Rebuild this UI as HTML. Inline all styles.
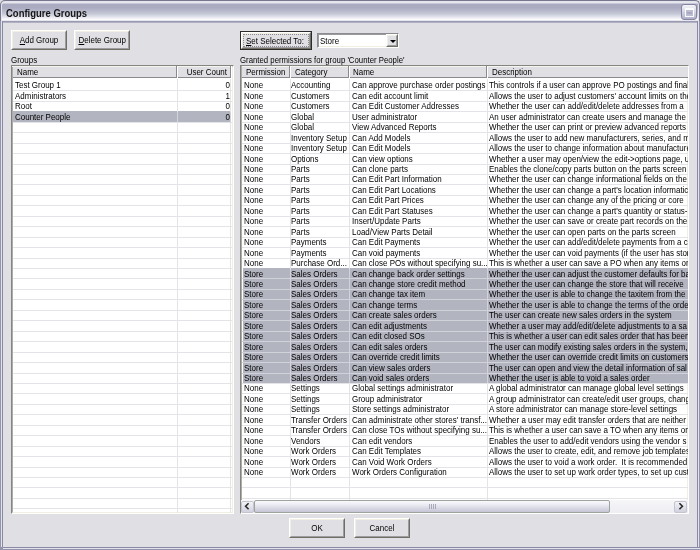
<!DOCTYPE html>
<html><head><meta charset="utf-8">
<style>
html,body{margin:0;padding:0;}
body{width:700px;height:550px;overflow:hidden;position:relative;background:#E0DFE3;font-family:"Liberation Sans",sans-serif;font-size:9.5px;color:#000;}
div,span{box-sizing:border-box;}
.a{position:absolute;}
.t{position:absolute;white-space:nowrap;line-height:10px;transform:scaleX(0.84);transform-origin:0 0;}
.tc{transform-origin:50% 0;}
.tr{transform-origin:100% 0;}
.btn{position:absolute;background:#E0DFE3;border-top:1px solid #FFFFFF;border-left:1px solid #FFFFFF;border-right:1px solid #716F64;border-bottom:1px solid #716F64;}
.btn:before{content:"";position:absolute;left:0;top:0;right:0;bottom:0;border-right:1px solid #9D9DA1;border-bottom:1px solid #9D9DA1;border-top:1px solid #F1EFE2;border-left:1px solid #F1EFE2;}
.u{text-decoration:underline;}
.lv{position:absolute;background:#fff;border-top:1px solid #85857F;border-left:1px solid #85857F;border-right:1px solid #FFFFFF;border-bottom:1px solid #FFFFFF;overflow:hidden;}
.lvin{position:absolute;left:0;top:0;right:0;bottom:0;border-top:1px solid #ACACA8;border-left:1px solid #ACACA8;border-right:1px solid #F1EFE2;border-bottom:1px solid #F1EFE2;}
.hd{position:absolute;background:#E0DFE3;}
.sep{position:absolute;top:0;height:12px;width:2px;border-left:1px solid #8A8A8E;border-right:1px solid #FFFFFF;}
.gl{position:absolute;height:1px;background:#E4E4E8;}
.gv{position:absolute;width:1px;background:#E4E4E8;}
.sel{position:absolute;background:#B2B4C0;}
#root{position:absolute;left:0;top:0;width:700px;height:550px;will-change:transform;}
</style></head><body><div id="root">

<div class="a" style="left:0;top:0;width:700px;height:23px;border-radius:5px 5px 0 0;border:1px solid #76768F;border-bottom:0;background-origin:border-box;background-image:linear-gradient(to bottom,#6E6E88 0px,#6E6E88 1px,#E6E6EE 1px,#E6E6EE 3px,#A9A9C0 4px,#ABABC2 8px,#C6C9D7 14px,#EDEDF3 18px,#FBFBFD 19.5px,#FBFBFD 20.3px,#9A9AB3 21.2px,#9A9AB3 22.2px,#D6D6DE 23px);box-shadow:inset 1px 1px 0 #E4E4EC, inset -1px 0 0 #E4E4EC;"></div>
<div class="t" style="left:6px;top:6.6px;font-weight:bold;font-size:10.6px;letter-spacing:0;line-height:12px;color:#151515;transform:scaleX(0.895);">Configure Groups</div>
<div class="a" style="left:681px;top:4px;width:16px;height:16px;border:1px solid #8585A3;border-radius:3px;background:linear-gradient(to bottom,#F4F4F8,#D0D0E0 55%,#AEAEC8);"></div>
<div class="a" style="left:684.6px;top:8px;width:9px;height:8.6px;border:1px solid #FAFAFC;border-top-width:2px;background:#BDBDD2;"></div>
<div class="a" style="left:686.5px;top:11.5px;width:5px;height:2px;background:#A8A8C2;"></div>
<div class="a" style="left:692.5px;top:12px;width:1.5px;height:1.5px;background:#FFFFFF;"></div>
<div class="a" style="left:0;top:21px;width:2px;height:529px;background:linear-gradient(to right,#9494AC 0,#9494AC 1px,#E2E2EC 1px,#E2E2EC 2px);"></div>
<div class="a" style="left:2px;top:21px;width:1px;height:528px;background:#8A8AA6;"></div>
<div class="a" style="left:698px;top:21px;width:2px;height:529px;background:linear-gradient(to right,#E2E2EC 0,#E2E2EC 1px,#9494AC 1px,#9494AC 2px);"></div>
<div class="a" style="left:697px;top:21px;width:1px;height:528px;background:#8A8AA6;"></div>
<div class="a" style="left:0;top:547px;width:700px;height:3px;background:linear-gradient(to bottom,#8A8AA6 0,#8A8AA6 1px,#E2E2EC 1px,#E2E2EC 2px,#9494AC 2px,#9494AC 3px);"></div>
<div class="a" style="left:0;top:547px;width:3px;height:3px;background:#9494AC;"></div>
<div class="btn" style="left:11px;top:30px;width:56px;height:20px;"></div>
<div class="t tc" style="left:11.0px;top:35.0px;width:56px;text-align:center;"><span class="u">A</span>dd Group</div>
<div class="btn" style="left:74px;top:30px;width:56px;height:20px;"></div>
<div class="t tc" style="left:74.0px;top:35.0px;width:56px;text-align:center;"><span class="u">D</span>elete Group</div>
<div class="a" style="left:240px;top:31px;width:72px;height:19px;border:1px solid #2A2A2A;">
<div class="btn" style="left:0;top:0;right:0;bottom:0;"></div>
<div class="a" style="left:2px;top:2px;right:2px;bottom:2px;border:1px dotted #8A8A8A;"></div>
</div>
<div class="t tc" style="left:238.5px;top:36.0px;width:72px;text-align:center;"><span class="u">S</span>et Selected To:</div>
<div class="btn" style="left:289px;top:518px;width:56px;height:20px;"></div>
<div class="t tc" style="left:289.0px;top:523.0px;width:56px;text-align:center;">OK</div>
<div class="btn" style="left:354px;top:518px;width:56px;height:20px;"></div>
<div class="t tc" style="left:354.0px;top:523.0px;width:56px;text-align:center;">Cancel</div>
<div class="a" style="left:317px;top:33px;width:82px;height:15px;background:#fff;border-top:1px solid #8C8C90;border-left:1px solid #8C8C90;border-right:1px solid #FFFFFF;border-bottom:1px solid #FFFFFF;box-shadow:inset 1px 1px 0 #9A9AA0, inset -1px -1px 0 #F1EFE2;"></div>
<div class="t" style="left:320px;top:36px;">Store</div>
<div class="btn" style="left:386px;top:34px;width:12px;height:13px;"></div>
<div class="a" style="left:389.5px;top:39.5px;width:0;height:0;border-left:3px solid transparent;border-right:3px solid transparent;border-top:3px solid #000;"></div>
<div class="t" style="left:11px;top:55px;">Groups</div>
<div class="t" style="left:240px;top:55px;transform:scaleX(0.82);">Granted permissions for group 'Counter People'</div>
<div class="lv" style="left:11px;top:65px;width:223px;height:449px;"><div class="lvin"></div></div>
<div class="sel" style="left:13px;top:111.25px;width:218px;height:10.45px;"></div>
<div class="gl" style="left:13px;top:90.35px;width:219px;background:#E4E4E8;"></div>
<div class="gl" style="left:13px;top:100.80px;width:219px;background:#E4E4E8;"></div>
<div class="gl" style="left:13px;top:121.70px;width:219px;background:#E4E4E8;"></div>
<div class="gl" style="left:13px;top:132.15px;width:219px;background:#E4E4E8;"></div>
<div class="gl" style="left:13px;top:142.60px;width:219px;background:#E4E4E8;"></div>
<div class="gl" style="left:13px;top:153.05px;width:219px;background:#E4E4E8;"></div>
<div class="gl" style="left:13px;top:163.50px;width:219px;background:#E4E4E8;"></div>
<div class="gl" style="left:13px;top:173.95px;width:219px;background:#E4E4E8;"></div>
<div class="gl" style="left:13px;top:184.40px;width:219px;background:#E4E4E8;"></div>
<div class="gl" style="left:13px;top:194.85px;width:219px;background:#E4E4E8;"></div>
<div class="gl" style="left:13px;top:205.30px;width:219px;background:#E4E4E8;"></div>
<div class="gl" style="left:13px;top:215.75px;width:219px;background:#E4E4E8;"></div>
<div class="gl" style="left:13px;top:226.20px;width:219px;background:#E4E4E8;"></div>
<div class="gl" style="left:13px;top:236.65px;width:219px;background:#E4E4E8;"></div>
<div class="gl" style="left:13px;top:247.10px;width:219px;background:#E4E4E8;"></div>
<div class="gl" style="left:13px;top:257.55px;width:219px;background:#E4E4E8;"></div>
<div class="gl" style="left:13px;top:268.00px;width:219px;background:#E4E4E8;"></div>
<div class="gl" style="left:13px;top:278.45px;width:219px;background:#E4E4E8;"></div>
<div class="gl" style="left:13px;top:288.90px;width:219px;background:#E4E4E8;"></div>
<div class="gl" style="left:13px;top:299.35px;width:219px;background:#E4E4E8;"></div>
<div class="gl" style="left:13px;top:309.80px;width:219px;background:#E4E4E8;"></div>
<div class="gl" style="left:13px;top:320.25px;width:219px;background:#E4E4E8;"></div>
<div class="gl" style="left:13px;top:330.70px;width:219px;background:#E4E4E8;"></div>
<div class="gl" style="left:13px;top:341.15px;width:219px;background:#E4E4E8;"></div>
<div class="gl" style="left:13px;top:351.60px;width:219px;background:#E4E4E8;"></div>
<div class="gl" style="left:13px;top:362.05px;width:219px;background:#E4E4E8;"></div>
<div class="gl" style="left:13px;top:372.50px;width:219px;background:#E4E4E8;"></div>
<div class="gl" style="left:13px;top:382.95px;width:219px;background:#E4E4E8;"></div>
<div class="gl" style="left:13px;top:393.40px;width:219px;background:#E4E4E8;"></div>
<div class="gl" style="left:13px;top:403.85px;width:219px;background:#E4E4E8;"></div>
<div class="gl" style="left:13px;top:414.30px;width:219px;background:#E4E4E8;"></div>
<div class="gl" style="left:13px;top:424.75px;width:219px;background:#E4E4E8;"></div>
<div class="gl" style="left:13px;top:435.20px;width:219px;background:#E4E4E8;"></div>
<div class="gl" style="left:13px;top:445.65px;width:219px;background:#E4E4E8;"></div>
<div class="gl" style="left:13px;top:456.10px;width:219px;background:#E4E4E8;"></div>
<div class="gl" style="left:13px;top:466.55px;width:219px;background:#E4E4E8;"></div>
<div class="gl" style="left:13px;top:477.00px;width:219px;background:#E4E4E8;"></div>
<div class="gl" style="left:13px;top:487.45px;width:219px;background:#E4E4E8;"></div>
<div class="gl" style="left:13px;top:497.90px;width:219px;background:#E4E4E8;"></div>
<div class="gl" style="left:13px;top:508.35px;width:219px;background:#E4E4E8;"></div>
<div class="gv" style="left:177px;top:79px;height:434px;"></div>
<div class="gv" style="left:177px;top:112.25px;height:9.45px;background:#D2D3DA;"></div>
<div class="gv" style="left:230px;top:79px;height:434px;"></div>
<div class="gv" style="left:230px;top:112.25px;height:9.45px;background:#D2D3DA;"></div>
<div class="hd" style="left:13px;top:67px;width:219px;height:11px;border-bottom:1px solid #8A8A8E;"></div>
<div class="a" style="left:12px;top:66px;width:220px;height:1px;background:#F4F4F0;"></div>
<div class="sep" style="left:176px;top:66px;"></div>
<div class="sep" style="left:230px;top:66px;"></div>
<div class="t" style="left:17px;top:67.4px;">Name</div>
<div class="t tr" style="left:177px;top:67.4px;width:50px;text-align:right;">User Count</div>
<div class="t" style="left:15px;top:80.40px;">Test Group 1</div>
<div class="t tr" style="left:178px;top:80.40px;width:52px;text-align:right;">0</div>
<div class="t" style="left:15px;top:90.85px;">Administrators</div>
<div class="t tr" style="left:178px;top:90.85px;width:52px;text-align:right;">1</div>
<div class="t" style="left:15px;top:101.30px;">Root</div>
<div class="t tr" style="left:178px;top:101.30px;width:52px;text-align:right;">0</div>
<div class="t" style="left:15px;top:111.75px;">Counter People</div>
<div class="t tr" style="left:178px;top:111.75px;width:52px;text-align:right;">0</div>
<div class="lv" style="left:240px;top:65px;width:449px;height:449px;"><div class="lvin"></div></div>
<div class="sel" style="left:243px;top:268.00px;width:445px;height:114.95px;"></div>
<div class="gl" style="left:242px;top:90.35px;width:446px;background:#E4E4E8;"></div>
<div class="gl" style="left:242px;top:100.80px;width:446px;background:#E4E4E8;"></div>
<div class="gl" style="left:242px;top:111.25px;width:446px;background:#E4E4E8;"></div>
<div class="gl" style="left:242px;top:121.70px;width:446px;background:#E4E4E8;"></div>
<div class="gl" style="left:242px;top:132.15px;width:446px;background:#E4E4E8;"></div>
<div class="gl" style="left:242px;top:142.60px;width:446px;background:#E4E4E8;"></div>
<div class="gl" style="left:242px;top:153.05px;width:446px;background:#E4E4E8;"></div>
<div class="gl" style="left:242px;top:163.50px;width:446px;background:#E4E4E8;"></div>
<div class="gl" style="left:242px;top:173.95px;width:446px;background:#E4E4E8;"></div>
<div class="gl" style="left:242px;top:184.40px;width:446px;background:#E4E4E8;"></div>
<div class="gl" style="left:242px;top:194.85px;width:446px;background:#E4E4E8;"></div>
<div class="gl" style="left:242px;top:205.30px;width:446px;background:#E4E4E8;"></div>
<div class="gl" style="left:242px;top:215.75px;width:446px;background:#E4E4E8;"></div>
<div class="gl" style="left:242px;top:226.20px;width:446px;background:#E4E4E8;"></div>
<div class="gl" style="left:242px;top:236.65px;width:446px;background:#E4E4E8;"></div>
<div class="gl" style="left:242px;top:247.10px;width:446px;background:#E4E4E8;"></div>
<div class="gl" style="left:242px;top:257.55px;width:446px;background:#E4E4E8;"></div>
<div class="gl" style="left:242px;top:278.45px;width:446px;background:#D2D3DA;"></div>
<div class="gl" style="left:242px;top:288.90px;width:446px;background:#D2D3DA;"></div>
<div class="gl" style="left:242px;top:299.35px;width:446px;background:#D2D3DA;"></div>
<div class="gl" style="left:242px;top:309.80px;width:446px;background:#D2D3DA;"></div>
<div class="gl" style="left:242px;top:320.25px;width:446px;background:#D2D3DA;"></div>
<div class="gl" style="left:242px;top:330.70px;width:446px;background:#D2D3DA;"></div>
<div class="gl" style="left:242px;top:341.15px;width:446px;background:#D2D3DA;"></div>
<div class="gl" style="left:242px;top:351.60px;width:446px;background:#D2D3DA;"></div>
<div class="gl" style="left:242px;top:362.05px;width:446px;background:#D2D3DA;"></div>
<div class="gl" style="left:242px;top:372.50px;width:446px;background:#D2D3DA;"></div>
<div class="gl" style="left:242px;top:382.95px;width:446px;background:#E4E4E8;"></div>
<div class="gl" style="left:242px;top:393.40px;width:446px;background:#E4E4E8;"></div>
<div class="gl" style="left:242px;top:403.85px;width:446px;background:#E4E4E8;"></div>
<div class="gl" style="left:242px;top:414.30px;width:446px;background:#E4E4E8;"></div>
<div class="gl" style="left:242px;top:424.75px;width:446px;background:#E4E4E8;"></div>
<div class="gl" style="left:242px;top:435.20px;width:446px;background:#E4E4E8;"></div>
<div class="gl" style="left:242px;top:445.65px;width:446px;background:#E4E4E8;"></div>
<div class="gl" style="left:242px;top:456.10px;width:446px;background:#E4E4E8;"></div>
<div class="gl" style="left:242px;top:466.55px;width:446px;background:#E4E4E8;"></div>
<div class="gl" style="left:242px;top:477.00px;width:446px;background:#E4E4E8;"></div>
<div class="gl" style="left:242px;top:487.45px;width:446px;background:#E4E4E8;"></div>
<div class="gl" style="left:242px;top:497.90px;width:446px;background:#E4E4E8;"></div>
<div class="gv" style="left:290px;top:79px;height:421px;"></div>
<div class="gv" style="left:290px;top:269.00px;height:113.95px;background:#D2D3DA;"></div>
<div class="gv" style="left:349px;top:79px;height:421px;"></div>
<div class="gv" style="left:349px;top:269.00px;height:113.95px;background:#D2D3DA;"></div>
<div class="gv" style="left:487px;top:79px;height:421px;"></div>
<div class="gv" style="left:487px;top:269.00px;height:113.95px;background:#D2D3DA;"></div>
<div class="hd" style="left:242px;top:67px;width:446px;height:11px;border-bottom:1px solid #8A8A8E;"></div>
<div class="a" style="left:242px;top:66px;width:446px;height:1px;background:#F4F4F0;"></div>
<div class="sep" style="left:289px;top:66px;"></div>
<div class="sep" style="left:348px;top:66px;"></div>
<div class="sep" style="left:486px;top:66px;"></div>
<div class="t" style="left:246px;top:67.4px;">Permission</div>
<div class="t" style="left:295px;top:67.4px;">Category</div>
<div class="t" style="left:353px;top:67.4px;">Name</div>
<div class="t" style="left:492px;top:67.4px;">Description</div>
<div class="t" style="left:244px;top:80.40px;">None</div>
<div class="t" style="left:291px;top:80.40px;">Accounting</div>
<div class="t" style="left:352px;top:80.40px;">Can approve purchase order postings</div>
<div class="a" style="left:487px;top:79.40px;width:201px;height:11px;overflow:hidden;"><div class="t" style="left:2px;top:1.0px;">This controls if a user can approve PO postings and final</div></div>
<div class="t" style="left:244px;top:90.85px;">None</div>
<div class="t" style="left:291px;top:90.85px;">Customers</div>
<div class="t" style="left:352px;top:90.85px;">Can edit account limit</div>
<div class="a" style="left:487px;top:89.85px;width:201px;height:11px;overflow:hidden;"><div class="t" style="left:2px;top:1.0px;">Allows the user to adjust customers' account limits on the</div></div>
<div class="t" style="left:244px;top:101.30px;">None</div>
<div class="t" style="left:291px;top:101.30px;">Customers</div>
<div class="t" style="left:352px;top:101.30px;">Can Edit Customer Addresses</div>
<div class="a" style="left:487px;top:100.30px;width:201px;height:11px;overflow:hidden;"><div class="t" style="left:2px;top:1.0px;">Whether the user can add/edit/delete addresses from a</div></div>
<div class="t" style="left:244px;top:111.75px;">None</div>
<div class="t" style="left:291px;top:111.75px;">Global</div>
<div class="t" style="left:352px;top:111.75px;">User administrator</div>
<div class="a" style="left:487px;top:110.75px;width:201px;height:11px;overflow:hidden;"><div class="t" style="left:2px;top:1.0px;">An user administrator can create users and manage the p</div></div>
<div class="t" style="left:244px;top:122.20px;">None</div>
<div class="t" style="left:291px;top:122.20px;">Global</div>
<div class="t" style="left:352px;top:122.20px;">View Advanced Reports</div>
<div class="a" style="left:487px;top:121.20px;width:201px;height:11px;overflow:hidden;"><div class="t" style="left:2px;top:1.0px;">Whether the user can print or preview advanced reports</div></div>
<div class="t" style="left:244px;top:132.65px;">None</div>
<div class="t" style="left:291px;top:132.65px;">Inventory Setup</div>
<div class="t" style="left:352px;top:132.65px;">Can Add Models</div>
<div class="a" style="left:487px;top:131.65px;width:201px;height:11px;overflow:hidden;"><div class="t" style="left:2px;top:1.0px;">Allows the user to add new manufacturers, series, and m</div></div>
<div class="t" style="left:244px;top:143.10px;">None</div>
<div class="t" style="left:291px;top:143.10px;">Inventory Setup</div>
<div class="t" style="left:352px;top:143.10px;">Can Edit Models</div>
<div class="a" style="left:487px;top:142.10px;width:201px;height:11px;overflow:hidden;"><div class="t" style="left:2px;top:1.0px;">Allows the user to change information about manufacture</div></div>
<div class="t" style="left:244px;top:153.55px;">None</div>
<div class="t" style="left:291px;top:153.55px;">Options</div>
<div class="t" style="left:352px;top:153.55px;">Can view options</div>
<div class="a" style="left:487px;top:152.55px;width:201px;height:11px;overflow:hidden;"><div class="t" style="left:2px;top:1.0px;">Whether a user may open/view the edit-&gt;options page, u</div></div>
<div class="t" style="left:244px;top:164.00px;">None</div>
<div class="t" style="left:291px;top:164.00px;">Parts</div>
<div class="t" style="left:352px;top:164.00px;">Can clone parts</div>
<div class="a" style="left:487px;top:163.00px;width:201px;height:11px;overflow:hidden;"><div class="t" style="left:2px;top:1.0px;">Enables the clone/copy parts button on the parts screen</div></div>
<div class="t" style="left:244px;top:174.45px;">None</div>
<div class="t" style="left:291px;top:174.45px;">Parts</div>
<div class="t" style="left:352px;top:174.45px;">Can Edit Part Information</div>
<div class="a" style="left:487px;top:173.45px;width:201px;height:11px;overflow:hidden;"><div class="t" style="left:2px;top:1.0px;">Whether the user can change informational fields on the</div></div>
<div class="t" style="left:244px;top:184.90px;">None</div>
<div class="t" style="left:291px;top:184.90px;">Parts</div>
<div class="t" style="left:352px;top:184.90px;">Can Edit Part Locations</div>
<div class="a" style="left:487px;top:183.90px;width:201px;height:11px;overflow:hidden;"><div class="t" style="left:2px;top:1.0px;">Whether the user can change a part's location informatic</div></div>
<div class="t" style="left:244px;top:195.35px;">None</div>
<div class="t" style="left:291px;top:195.35px;">Parts</div>
<div class="t" style="left:352px;top:195.35px;">Can Edit Part Prices</div>
<div class="a" style="left:487px;top:194.35px;width:201px;height:11px;overflow:hidden;"><div class="t" style="left:2px;top:1.0px;">Whether the user can change any of the pricing or core</div></div>
<div class="t" style="left:244px;top:205.80px;">None</div>
<div class="t" style="left:291px;top:205.80px;">Parts</div>
<div class="t" style="left:352px;top:205.80px;">Can Edit Part Statuses</div>
<div class="a" style="left:487px;top:204.80px;width:201px;height:11px;overflow:hidden;"><div class="t" style="left:2px;top:1.0px;">Whether the user can change a part's quantity or status-</div></div>
<div class="t" style="left:244px;top:216.25px;">None</div>
<div class="t" style="left:291px;top:216.25px;">Parts</div>
<div class="t" style="left:352px;top:216.25px;">Insert/Update Parts</div>
<div class="a" style="left:487px;top:215.25px;width:201px;height:11px;overflow:hidden;"><div class="t" style="left:2px;top:1.0px;">Whether the user can save or create part records on the</div></div>
<div class="t" style="left:244px;top:226.70px;">None</div>
<div class="t" style="left:291px;top:226.70px;">Parts</div>
<div class="t" style="left:352px;top:226.70px;">Load/View Parts Detail</div>
<div class="a" style="left:487px;top:225.70px;width:201px;height:11px;overflow:hidden;"><div class="t" style="left:2px;top:1.0px;">Whether the user can open parts on the parts screen</div></div>
<div class="t" style="left:244px;top:237.15px;">None</div>
<div class="t" style="left:291px;top:237.15px;">Payments</div>
<div class="t" style="left:352px;top:237.15px;">Can Edit Payments</div>
<div class="a" style="left:487px;top:236.15px;width:201px;height:11px;overflow:hidden;"><div class="t" style="left:2px;top:1.0px;">Whether the user can add/edit/delete payments from a c</div></div>
<div class="t" style="left:244px;top:247.60px;">None</div>
<div class="t" style="left:291px;top:247.60px;">Payments</div>
<div class="t" style="left:352px;top:247.60px;">Can void payments</div>
<div class="a" style="left:487px;top:246.60px;width:201px;height:11px;overflow:hidden;"><div class="t" style="left:2px;top:1.0px;">Whether the user can void payments (if the user has stor</div></div>
<div class="t" style="left:244px;top:258.05px;">None</div>
<div class="t" style="left:291px;top:258.05px;">Purchase Ord...</div>
<div class="t" style="left:352px;top:258.05px;">Can close POs without specifying su...</div>
<div class="a" style="left:487px;top:257.05px;width:201px;height:11px;overflow:hidden;"><div class="t" style="left:2px;top:1.0px;">This is whether a user can save a PO when any items or</div></div>
<div class="t" style="left:244px;top:268.50px;">Store</div>
<div class="t" style="left:291px;top:268.50px;">Sales Orders</div>
<div class="t" style="left:352px;top:268.50px;">Can change back order settings</div>
<div class="a" style="left:487px;top:267.50px;width:201px;height:11px;overflow:hidden;"><div class="t" style="left:2px;top:1.0px;">Whether the user can adjust the customer defaults for ba</div></div>
<div class="t" style="left:244px;top:278.95px;">Store</div>
<div class="t" style="left:291px;top:278.95px;">Sales Orders</div>
<div class="t" style="left:352px;top:278.95px;">Can change store credit method</div>
<div class="a" style="left:487px;top:277.95px;width:201px;height:11px;overflow:hidden;"><div class="t" style="left:2px;top:1.0px;">Whether the user can change the store that will receive</div></div>
<div class="t" style="left:244px;top:289.40px;">Store</div>
<div class="t" style="left:291px;top:289.40px;">Sales Orders</div>
<div class="t" style="left:352px;top:289.40px;">Can change tax item</div>
<div class="a" style="left:487px;top:288.40px;width:201px;height:11px;overflow:hidden;"><div class="t" style="left:2px;top:1.0px;">Whether the user is able to change the taxitem from the c</div></div>
<div class="t" style="left:244px;top:299.85px;">Store</div>
<div class="t" style="left:291px;top:299.85px;">Sales Orders</div>
<div class="t" style="left:352px;top:299.85px;">Can change terms</div>
<div class="a" style="left:487px;top:298.85px;width:201px;height:11px;overflow:hidden;"><div class="t" style="left:2px;top:1.0px;">Whether the user is able to change the terms of the orde</div></div>
<div class="t" style="left:244px;top:310.30px;">Store</div>
<div class="t" style="left:291px;top:310.30px;">Sales Orders</div>
<div class="t" style="left:352px;top:310.30px;">Can create sales orders</div>
<div class="a" style="left:487px;top:309.30px;width:201px;height:11px;overflow:hidden;"><div class="t" style="left:2px;top:1.0px;">The user can create new sales orders in the system</div></div>
<div class="t" style="left:244px;top:320.75px;">Store</div>
<div class="t" style="left:291px;top:320.75px;">Sales Orders</div>
<div class="t" style="left:352px;top:320.75px;">Can edit adjustments</div>
<div class="a" style="left:487px;top:319.75px;width:201px;height:11px;overflow:hidden;"><div class="t" style="left:2px;top:1.0px;">Whether a user may add/edit/delete adjustments to a sa</div></div>
<div class="t" style="left:244px;top:331.20px;">Store</div>
<div class="t" style="left:291px;top:331.20px;">Sales Orders</div>
<div class="t" style="left:352px;top:331.20px;">Can edit closed SOs</div>
<div class="a" style="left:487px;top:330.20px;width:201px;height:11px;overflow:hidden;"><div class="t" style="left:2px;top:1.0px;">This is whether a user can edit sales order that has been</div></div>
<div class="t" style="left:244px;top:341.65px;">Store</div>
<div class="t" style="left:291px;top:341.65px;">Sales Orders</div>
<div class="t" style="left:352px;top:341.65px;">Can edit sales orders</div>
<div class="a" style="left:487px;top:340.65px;width:201px;height:11px;overflow:hidden;"><div class="t" style="left:2px;top:1.0px;">The user can modify existing sales orders in the system, r</div></div>
<div class="t" style="left:244px;top:352.10px;">Store</div>
<div class="t" style="left:291px;top:352.10px;">Sales Orders</div>
<div class="t" style="left:352px;top:352.10px;">Can override credit limits</div>
<div class="a" style="left:487px;top:351.10px;width:201px;height:11px;overflow:hidden;"><div class="t" style="left:2px;top:1.0px;">Whether the user can override credit limits on customers.</div></div>
<div class="t" style="left:244px;top:362.55px;">Store</div>
<div class="t" style="left:291px;top:362.55px;">Sales Orders</div>
<div class="t" style="left:352px;top:362.55px;">Can view sales orders</div>
<div class="a" style="left:487px;top:361.55px;width:201px;height:11px;overflow:hidden;"><div class="t" style="left:2px;top:1.0px;">The user can open and view the detail information of sal</div></div>
<div class="t" style="left:244px;top:373.00px;">Store</div>
<div class="t" style="left:291px;top:373.00px;">Sales Orders</div>
<div class="t" style="left:352px;top:373.00px;">Can void sales orders</div>
<div class="a" style="left:487px;top:372.00px;width:201px;height:11px;overflow:hidden;"><div class="t" style="left:2px;top:1.0px;">Whether the user is able to void a sales order</div></div>
<div class="t" style="left:244px;top:383.45px;">None</div>
<div class="t" style="left:291px;top:383.45px;">Settings</div>
<div class="t" style="left:352px;top:383.45px;">Global settings administrator</div>
<div class="a" style="left:487px;top:382.45px;width:201px;height:11px;overflow:hidden;"><div class="t" style="left:2px;top:1.0px;">A global administrator can manage global level settings</div></div>
<div class="t" style="left:244px;top:393.90px;">None</div>
<div class="t" style="left:291px;top:393.90px;">Settings</div>
<div class="t" style="left:352px;top:393.90px;">Group administrator</div>
<div class="a" style="left:487px;top:392.90px;width:201px;height:11px;overflow:hidden;"><div class="t" style="left:2px;top:1.0px;">A group administrator can create/edit user groups, chang</div></div>
<div class="t" style="left:244px;top:404.35px;">None</div>
<div class="t" style="left:291px;top:404.35px;">Settings</div>
<div class="t" style="left:352px;top:404.35px;">Store settings administrator</div>
<div class="a" style="left:487px;top:403.35px;width:201px;height:11px;overflow:hidden;"><div class="t" style="left:2px;top:1.0px;">A store administrator can manage store-level settings</div></div>
<div class="t" style="left:244px;top:414.80px;">None</div>
<div class="t" style="left:291px;top:414.80px;">Transfer Orders</div>
<div class="t" style="left:352px;top:414.80px;">Can administrate other stores' transf...</div>
<div class="a" style="left:487px;top:413.80px;width:201px;height:11px;overflow:hidden;"><div class="t" style="left:2px;top:1.0px;">Whether a user may edit transfer orders that are neither t</div></div>
<div class="t" style="left:244px;top:425.25px;">None</div>
<div class="t" style="left:291px;top:425.25px;">Transfer Orders</div>
<div class="t" style="left:352px;top:425.25px;">Can close TOs without specifying su...</div>
<div class="a" style="left:487px;top:424.25px;width:201px;height:11px;overflow:hidden;"><div class="t" style="left:2px;top:1.0px;">This is whether a user can save a TO when any items or</div></div>
<div class="t" style="left:244px;top:435.70px;">None</div>
<div class="t" style="left:291px;top:435.70px;">Vendors</div>
<div class="t" style="left:352px;top:435.70px;">Can edit vendors</div>
<div class="a" style="left:487px;top:434.70px;width:201px;height:11px;overflow:hidden;"><div class="t" style="left:2px;top:1.0px;">Enables the user to add/edit vendors using the vendor s</div></div>
<div class="t" style="left:244px;top:446.15px;">None</div>
<div class="t" style="left:291px;top:446.15px;">Work Orders</div>
<div class="t" style="left:352px;top:446.15px;">Can Edit Templates</div>
<div class="a" style="left:487px;top:445.15px;width:201px;height:11px;overflow:hidden;"><div class="t" style="left:2px;top:1.0px;">Allows the user to create, edit, and remove job templates</div></div>
<div class="t" style="left:244px;top:456.60px;">None</div>
<div class="t" style="left:291px;top:456.60px;">Work Orders</div>
<div class="t" style="left:352px;top:456.60px;">Can Void Work Orders</div>
<div class="a" style="left:487px;top:455.60px;width:201px;height:11px;overflow:hidden;"><div class="t" style="left:2px;top:1.0px;">Allows the user to void a work order. &nbsp;It is recommended</div></div>
<div class="t" style="left:244px;top:467.05px;">None</div>
<div class="t" style="left:291px;top:467.05px;">Work Orders</div>
<div class="t" style="left:352px;top:467.05px;">Work Orders Configuration</div>
<div class="a" style="left:487px;top:466.05px;width:201px;height:11px;overflow:hidden;"><div class="t" style="left:2px;top:1.0px;">Allows the user to set up work order types, to set up cust</div></div>
<div class="a" style="left:241px;top:500px;width:447px;height:13px;background:linear-gradient(to bottom,#F6F6F9,#EDEDF2);"></div>
<div class="a" style="left:241px;top:500.5px;width:13px;height:12.5px;border:1px solid #C4C4D0;border-radius:2px;background:linear-gradient(to bottom,#F2F2F7,#D2D2E0);"></div>
<svg class="a" style="left:241px;top:500px;" width="13" height="13" viewBox="0 0 13 13"><polyline points="7.6,3.2 4.6,6.2 7.6,9.2" fill="none" stroke="#2A2A2A" stroke-width="1.6" stroke-linecap="butt" stroke-linejoin="miter"/></svg>
<div class="a" style="left:674px;top:500.5px;width:13px;height:12.5px;border:1px solid #C4C4D0;border-radius:2px;background:linear-gradient(to bottom,#F2F2F7,#D2D2E0);"></div>
<svg class="a" style="left:674px;top:500px;" width="13" height="13" viewBox="0 0 13 13"><polyline points="5.4,3.2 8.4,6.2 5.4,9.2" fill="none" stroke="#2A2A2A" stroke-width="1.6" stroke-linecap="butt" stroke-linejoin="miter"/></svg>
<div class="a" style="left:254px;top:500px;width:356px;height:13px;border:1px solid #9EA39E;border-radius:2px;background:linear-gradient(to bottom,#FAFAFD,#E8E8F0 40%,#C4C4D6);"></div>
<div class="a" style="left:429px;top:504px;width:1px;height:5px;background:#A8A8B8;"></div>
<div class="a" style="left:431px;top:504px;width:1px;height:5px;background:#A8A8B8;"></div>
<div class="a" style="left:433px;top:504px;width:1px;height:5px;background:#A8A8B8;"></div>
<div class="a" style="left:435px;top:504px;width:1px;height:5px;background:#A8A8B8;"></div>
</div></body></html>
